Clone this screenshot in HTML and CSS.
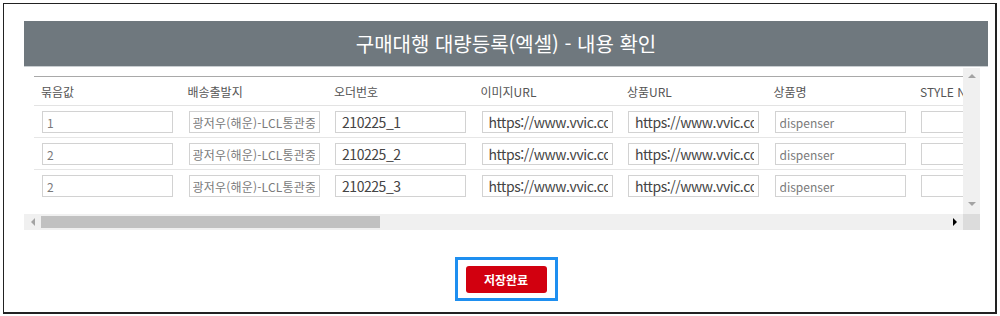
FILE: index.html
```html
<!DOCTYPE html>
<html lang="ko">
<head>
<meta charset="utf-8">
<title>구매대행 대량등록(엑셀) - 내용 확인</title>
<link rel="stylesheet" href="styles.css">
</head>
<body>
<div class="frame">
  <div class="titlebar">구매대행 대량등록(엑셀) - 내용 확인</div>
  <div class="scroller">
    <div class="viewport">
      <table class="data">
        <thead>
          <tr>
            <th>묶음값</th><th>배송출발지</th><th>오더번호</th><th>이미지URL</th><th>상품URL</th><th>상품명</th><th>STYLE NO</th><th>색상</th><th>사이즈</th><th>수량</th><th>단가</th><th>메모</th>
          </tr>
        </thead>
        <tbody>
          <tr>
            <td><input class="in-sm" value="1"></td>
            <td><input class="in-sm kr" value="광저우(해운)-LCL통관중량"></td>
            <td><input class="in-lg" value="210225_1"></td>
            <td><input class="in-lg" value="https://www.vvic.com/item/1"></td>
            <td><input class="in-lg" value="https://www.vvic.com/item/1"></td>
            <td><input class="in-sm" value="dispenser"></td>
            <td><input class="in-sm" value=""></td>
            <td><input class="in-sm" value=""></td>
            <td><input class="in-sm" value=""></td>
            <td><input class="in-sm" value=""></td>
            <td><input class="in-sm" value=""></td>
            <td><input class="in-sm" value=""></td>
          </tr>
          <tr>
            <td><input class="in-sm" value="2"></td>
            <td><input class="in-sm kr" value="광저우(해운)-LCL통관중량"></td>
            <td><input class="in-lg" value="210225_2"></td>
            <td><input class="in-lg" value="https://www.vvic.com/item/2"></td>
            <td><input class="in-lg" value="https://www.vvic.com/item/2"></td>
            <td><input class="in-sm" value="dispenser"></td>
            <td><input class="in-sm" value=""></td>
            <td><input class="in-sm" value=""></td>
            <td><input class="in-sm" value=""></td>
            <td><input class="in-sm" value=""></td>
            <td><input class="in-sm" value=""></td>
            <td><input class="in-sm" value=""></td>
          </tr>
          <tr>
            <td><input class="in-sm" value="2"></td>
            <td><input class="in-sm kr" value="광저우(해운)-LCL통관중량"></td>
            <td><input class="in-lg" value="210225_3"></td>
            <td><input class="in-lg" value="https://www.vvic.com/item/3"></td>
            <td><input class="in-lg" value="https://www.vvic.com/item/3"></td>
            <td><input class="in-sm" value="dispenser"></td>
            <td><input class="in-sm" value=""></td>
            <td><input class="in-sm" value=""></td>
            <td><input class="in-sm" value=""></td>
            <td><input class="in-sm" value=""></td>
            <td><input class="in-sm" value=""></td>
            <td><input class="in-sm" value=""></td>
          </tr>
        </tbody>
      </table>
    </div>
    <div class="vbar"><span class="arr up"></span><span class="arr down"></span></div>
    <div class="hbar">
      <span class="hbtn"><span class="arr left"></span></span>
      <div class="htrack"><div class="thumb"></div></div>
      <span class="hbtn"><span class="arr right"></span></span>
    </div>
    <div class="corner"></div>
  </div>
  <div class="actions">
    <span class="focus-ring"><button class="save" type="button">저장완료</button></span>
  </div>
</div>
</body>
</html>
```
FILE: styles.css
```css
* { box-sizing: border-box; }
html, body { margin: 0; padding: 0; background: #fff; }
body {
  font-family: "Noto Sans CJK KR", "Noto Sans", sans-serif;
  color: #333;
}
.frame {
  margin: 3px 0 0 3px;
  width: 994px;
  height: 311px;
  border: 1px solid #222;
  border-right-width: 2px;
  border-bottom-width: 2px;
  padding: 17px 7px 0 20px;
}
.titlebar {
  height: 46px;
  background: #6f787e;
  border-bottom: 1px solid #c9ced1;
  color: #fff;
  font-size: 20px;
  line-height: 1;
  display: flex;
  align-items: center;
  justify-content: center;
}
.scroller {
  margin-top: 1px;
  width: 956px;
  display: grid;
  grid-template-columns: 939px 17px;
  grid-template-rows: 146px 16px;
}
.viewport {
  overflow: hidden;
  padding: 8px 0 0 10px;
}
.data {
  border-collapse: collapse;
  table-layout: fixed;
  width: 1758px;
}
.data th, .data td { width: 146.5px; }
.data th {
  text-align: left;
  font-weight: normal;
  font-size: 12px;
  color: #555;
  height: 29px;
  padding: 0 0 0 7px;
  border-top: 1px solid #a9a9a9;
  border-bottom: 1px solid #e3e3e3;
  white-space: nowrap;
}
.data td {
  padding: 5px 0 4px 8px;
}
.data tbody tr + tr td { border-top: 1px solid #e6e6e6; }
.data input {
  display: block;
  width: 131px;
  height: 22px;
  border: 1px solid #d2d2d2;
  padding: 0 4px;
  font-family: "Noto Sans CJK KR", "Noto Sans", sans-serif;
  background: #fff;
  outline: none;
}
.in-sm { font-size: 12px; color: #7a7a7a; }
.in-sm.kr { letter-spacing: 0.2px; padding-left: 3px !important; }
.in-lg { font-size: 14px; color: #444; letter-spacing: -0.45px; padding-left: 6px !important; }
.vbar {
  background: #f0f0f0;
  display: flex;
  flex-direction: column;
  align-items: center;
  justify-content: space-between;
  padding: 6px 0 8px;
}
.hbar {
  grid-column: 1 / 2;
  background: #f0f0f0;
  display: flex;
  align-items: center;
}
.hbtn {
  width: 17px;
  height: 16px;
  display: flex;
  align-items: center;
  justify-content: center;
}
.htrack {
  flex: 1;
  height: 16px;
  display: flex;
  align-items: center;
}
.thumb {
  width: 339px;
  height: 12px;
  background: #c1c1c1;
}
.corner { background: #dcdcdc; }
.arr { display: block; width: 0; height: 0; }
.arr.up {
  border-left: 4px solid transparent;
  border-right: 4px solid transparent;
  border-bottom: 4px solid #a3a3a3;
}
.arr.down {
  border-left: 4px solid transparent;
  border-right: 4px solid transparent;
  border-top: 4px solid #a3a3a3;
}
.arr.left {
  border-top: 4px solid transparent;
  border-bottom: 4px solid transparent;
  border-right: 4px solid #a3a3a3;
}
.arr.right {
  border-top: 4px solid transparent;
  border-bottom: 4px solid transparent;
  border-left: 4px solid #000;
}
.actions {
  width: 964px;
  display: flex;
  justify-content: center;
  margin-top: 27px;
}
.focus-ring {
  display: inline-flex;
  border: 3px solid #1e8ff0;
  padding: 6px 8px 5px;
}
.save {
  width: 81px;
  height: 27px;
  background: #d2000f;
  color: #fff;
  border: none;
  border-radius: 3px;
  font-family: "Noto Sans CJK KR", "Noto Sans", sans-serif;
  font-size: 12px;
  font-weight: bold;
  padding: 0;
}
```
